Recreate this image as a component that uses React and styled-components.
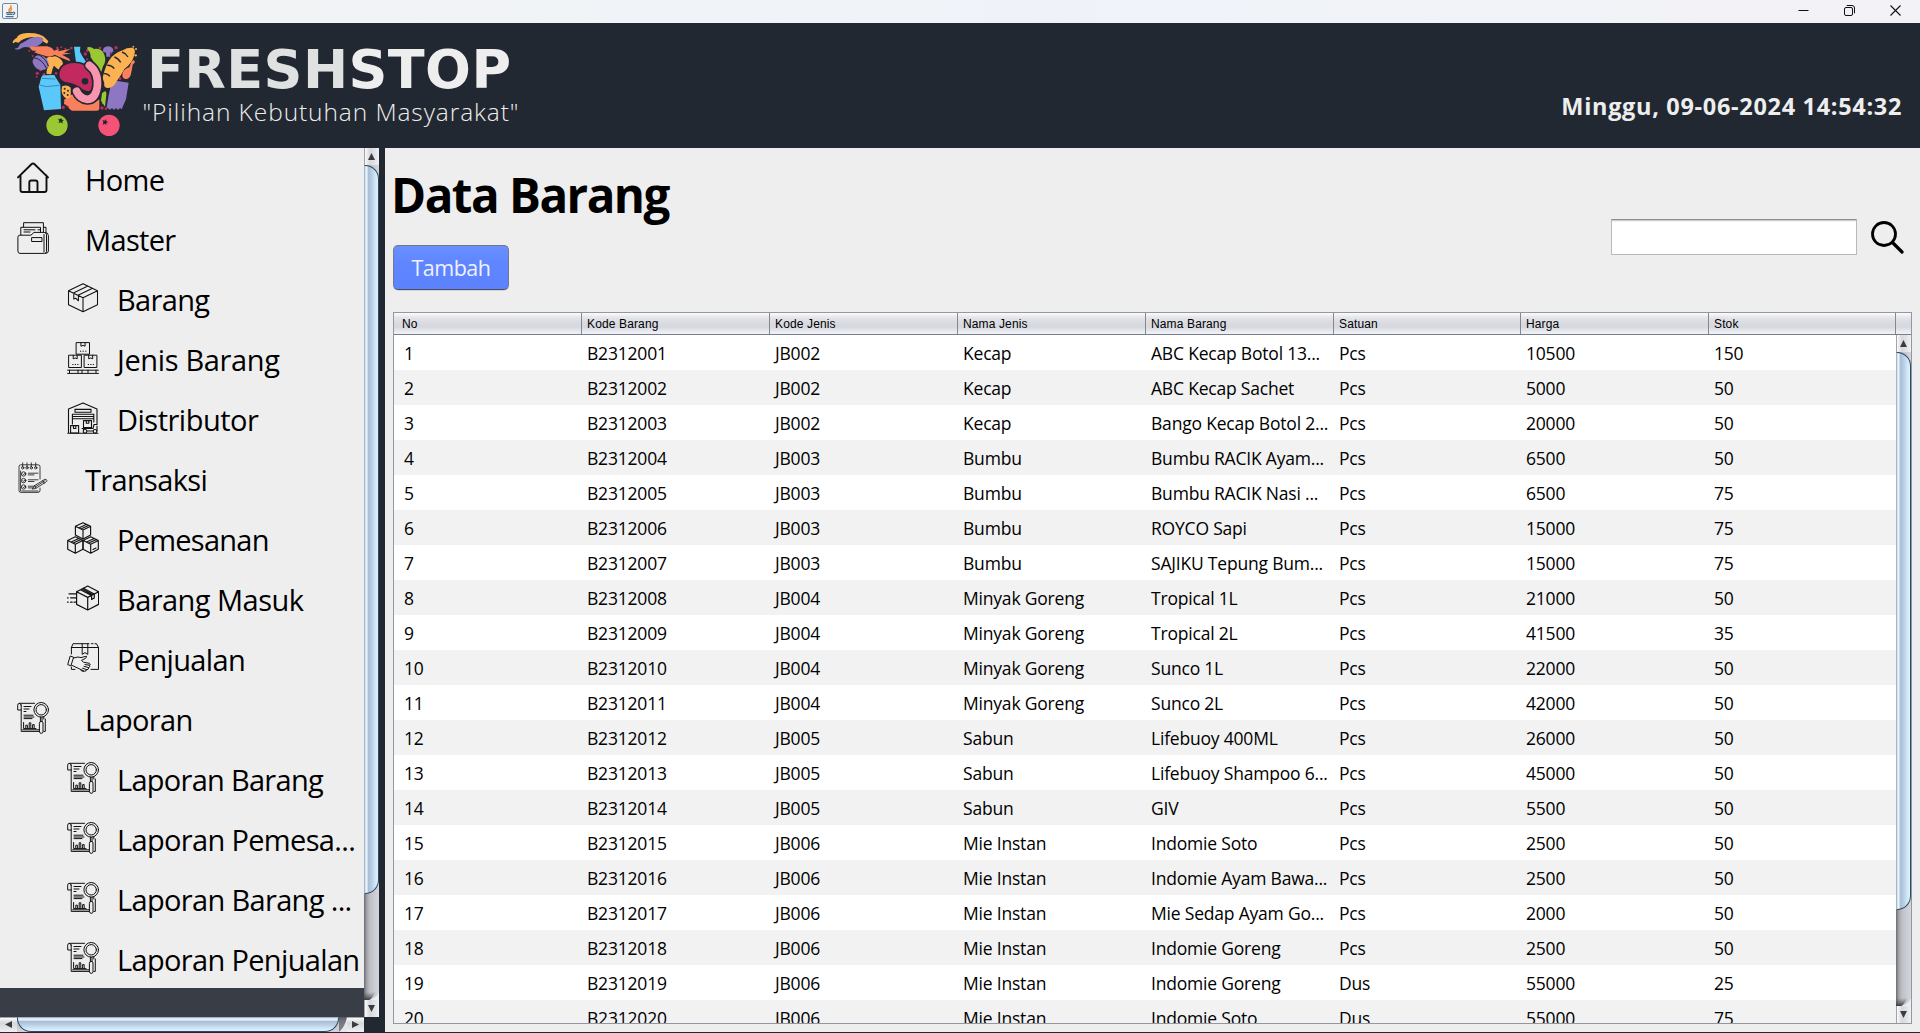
import React from "react";
import styled, { createGlobalStyle } from "styled-components";

const Global = createGlobalStyle`
  * { box-sizing: border-box; }
  html, body { margin: 0; padding: 0; overflow: hidden; }
  body { font-family: "Open Sans", "Noto Sans", sans-serif; color: #000; background: #222831; }
`;

const Window = styled.div`
  width: 1920px;
  height: 1033px;
  display: flex;
  flex-direction: column;
  background: #222831;
  overflow: hidden;
`;

const TitleBar = styled.div`
  height: 23px;
  flex: none;
  display: flex;
  justify-content: space-between;
  background: linear-gradient(90deg, #f2f3f4, #eff3f9 55%, #f3f2f6);
`;

const Header = styled.header`
  height: 125px;
  flex: none;
  display: flex;
  justify-content: space-between;
  background: #222831;
`;

const Clock = styled.div`
  padding: 66px 18px 0 0;
  height: 125px;
  line-height: 34px;
  font-size: 23.5px;
  font-weight: 700;
  letter-spacing: 0.68px;
  color: #eee;
  white-space: nowrap;
`;

const Body = styled.div`
  height: 884px;
  flex: none;
  display: flex;
`;

const Sidebar = styled.aside`
  width: 385px;
  flex: none;
  display: flex;
  flex-direction: column;
`;

const SideTop = styled.div`
  height: 869px;
  display: flex;
`;

const Menu = styled.nav`
  width: 364px;
  height: 869px;
  background: linear-gradient(#eee 0 840px, #393e46 840px);
  overflow: hidden;
`;

const MenuItem = styled.div`
  height: 60px;
  display: flex;
  align-items: flex-start;
  padding: 14px 0 0 ${(p) => (p.$sub ? 67 : 17)}px;
  svg { flex: none; width: 32px; height: 32px; }
`;

const MenuLabel = styled.span`
  margin-left: ${(p) => (p.$sub ? 18 : 36)}px;
  margin-top: -2px;
  line-height: 39px;
  font-size: 29px;
  letter-spacing: ${(p) => p.$tracking ?? -0.66}px;
  white-space: nowrap;
`;

const VBar = styled.div`
  width: 15px;
  height: ${(p) => p.$h}px;
  flex: none;
  display: flex;
  flex-direction: column;
  background: linear-gradient(90deg, #6b6c72 0, #a6a7ad 3px, #bfc0c6 6px, #cfcfd7 12px, #d4d4dc);
`;

const VThumb = styled.div`
  height: ${(p) => p.$h}px;
  flex: none;
  border: 1px solid #2c4a66;
  border-left: 1px solid #a3b5c6;
  border-radius: 0 14px 14px 0;
  background: linear-gradient(90deg, #c6dcee 0, #f7fbfe 2px, #a9bed3 3px, #b3cae0 6px, #cfe4f5 10px, #dff3fc);
`;

const VCap = styled.div`
  height: ${(p) => p.$h}px;
  flex: none;
  background: linear-gradient(90deg, #a3a4aa 0, #a3a4aa 1px, #fafafa 1px, #d6d8dc 6px, #e2e4e8 11px, #f0f1f3);
  svg { display: block; }
`;

const TrackEnd = styled.svg`
  display: block;
  flex: none;
`;

const Spacer = styled.div`
  flex: 1;
`;

const HBar = styled.div`
  width: 364px;
  height: 15px;
  display: flex;
  background: linear-gradient(#6b6c72 0, #a6a7ad 3px, #bfc0c6 6px, #cfcfd7 12px, #d4d4dc);
`;

const HThumb = styled.div`
  width: 322px;
  height: 15px;
  border: 1px solid #2c4a66;
  border-top-color: #a3b5c6;
  border-radius: 0 0 14px 14px;
  background: linear-gradient(#c6dcee 0, #f7fbfe 2px, #a9bed3 3px, #b3cae0 6px, #cfe4f5 10px, #dff3fc);
`;

const HCap = styled.div`
  width: 17px;
  height: 15px;
  background: linear-gradient(#a3a4aa 0, #a3a4aa 1px, #fafafa 1px, #d6d8dc 6px, #e2e4e8 11px, #f0f1f3);
  svg { display: block; }
`;

const Main = styled.main`
  width: 1535px;
  height: 884px;
  background: #eee;
  padding: 14px 9px 0 8px;
`;

const TopArea = styled.div`
  height: 150px;
  display: flex;
  justify-content: space-between;
`;

const Title = styled.h1`
  margin: 0 0 0 -2px;
  height: 64px;
  padding-top: 1px;
  line-height: 64px;
  font-size: 47.5px;
  font-weight: 700;
  letter-spacing: -1.5px;
  white-space: nowrap;
`;

const Button = styled.button`
  display: block;
  margin: 19px 0 0;
  width: 116px;
  height: 45px;
  padding: 0;
  border: 1px solid #74798a;
  border-bottom-color: #4c4f5c;
  border-radius: 5px;
  background: linear-gradient(#6a8fff, #5f85ff 45%, #5c82ff);
  box-shadow: 0 1px 0 #d4d4d6;
  color: #eef1ff;
  font-family: inherit;
  font-size: 21.5px;
  letter-spacing: -0.5px;
`;

const SearchArea = styled.div`
  display: flex;
  align-items: flex-start;
  gap: 14px;
  padding: 57px 7px 0 0;
  svg { margin-top: 2px; display: block; }
`;

const SearchInput = styled.input`
  width: 246px;
  height: 36px;
  padding: 0 6px;
  border: 1px solid #b9b9b9;
  border-top-color: #8b8c8e;
  border-radius: 0;
  outline: none;
  background: #fff;
  box-shadow: inset 0 1px 0 #cfcfcf, inset 0 2px 0 #f2f2f2;
`;

const Table = styled.div`
  width: 1519px;
  height: 712px;
  border: 1px solid #9297a1;
  display: flex;
  flex-direction: column;
  background: #fff;
`;

const HeadRow = styled.div`
  height: 22px;
  flex: none;
  display: grid;
  grid-template-columns: 188px 188px 188px 188px 188px 187px 188px 187px 1fr;
  border-bottom: 1px solid #7a7d85;
  background: linear-gradient(#fbfbfc 0, #e3e4e9 5px, #dadbe1 10px, #d6d8de 14px, #e6e9f0 18px, #eff2f8);
`;

const HeadCell = styled.div`
  padding: 1px 0 0 ${(p) => (p.$first ? 8 : 5)}px;
  height: 21px;
  border-right: ${(p) => (p.$last ? 0 : 1)}px solid #85888f;
  font: 12px/20px "Liberation Sans", Arial, sans-serif;
  letter-spacing: 0.13px;
  white-space: nowrap;
`;

const TableBody = styled.div`
  display: flex;
  height: 688px;
`;

const Rows = styled.div`
  width: 1502px;
  height: 688px;
  overflow: hidden;
`;

const Row = styled.div`
  height: 35px;
  display: grid;
  grid-template-columns: 188px 188px 188px 188px 188px 187px 188px 187px;
  background: ${(p) => (p.$alt ? "#f2f2f2" : "#fff")};
`;

const Cell = styled.div`
  padding: 1px 0 0 ${(p) => (p.$first ? 10 : 5)}px;
  line-height: 35px;
  font-size: 17.5px;
  letter-spacing: -0.2px;
  white-space: nowrap;
`;

const Controls = styled.div`
  display: flex;
  align-items: flex-start;
  gap: 35px;
  padding: 5px 19px 0 0;
  svg { display: block; }
`;

const AppIcon = styled.div`
  padding: 3px 0 0 2px;
  svg { display: block; }
`;

const LineIcon = ({ children, w = 1 }) => (
  <svg viewBox="0 0 32 32" fill="none" stroke="#111" strokeWidth={w} strokeLinejoin="round" strokeLinecap="round">
    {children}
  </svg>
);

const HomeIcon = () => (
  <LineIcon w={1.9}>
    <path d="M1 15.4 14.4 2.2Q16 .8 17.6 2.2L31 15.4M3.5 13.5V28Q3.5 30 5.5 30H27.5Q29.5 30 29.5 28V13.5M12.3 30V20.5Q12.3 18.5 14.3 18.5H18.5Q20.5 18.5 20.5 20.5V30" />
  </LineIcon>
);

const FolderIcon = () => (
  <LineIcon>
    <path d="M.9 15Q.9 13.2 2.7 13.2H14L17 10.4H27.2Q29.5 10.4 29.5 12.6V29.5Q29.5 31.4 27.5 31.4H3Q.9 31.4 .9 29.4Z" />
    <path d="M3.8 13V5.3H6.6V.7H26.4V10M26.4 5.3H29V10.4M6.6 5.3H23.5V10M28 10.5Q31.4 10.5 31.4 13.5V29Q31.4 31.4 28.5 31.4M27 12.5V30" />
    <path d="M7 7.8H18M7 10H13M15 15.6H25V19.5H15ZM21 7.8H23" />
  </LineIcon>
);

const BoxIcon = () => (
  <LineIcon w={1.05}>
    <path d="M16 1.7 30.5 8.7V22.8L16 29.8 1.5 22.8V8.7ZM1.5 8.7 16 15.7 30.5 8.7M16 15.7V29.8M6.4 11 20.9 4M11 13.3 25.6 6.3M6.8 11.2V17L8.7 16.2 11.4 18.8V13.4" />
  </LineIcon>
);

const SmallBox = ({ x, y, w = 13, h = 12 }) => (
  <g transform={`translate(${x} ${y})`}>
    <path d={`M0 0H${w}V${h}H0ZM${w * 0.34} 0V3.6L${w * 0.5} 2.8 ${w * 0.66} 3.6V0`} />
    <path d={`M${w * 0.3} ${h - 3}h.4M${w * 0.5} ${h - 3}h.4M${w * 0.7} ${h - 3}h.4`} />
  </g>
);

const StackIcon = () => (
  <LineIcon>
    <SmallBox x={9.5} y={0.6} h={11.6} />
    <SmallBox x={2} y={13.2} w={12.4} h={12.3} />
    <SmallBox x={17.5} y={13.2} w={12.4} h={12.3} />
    <path d="M.6 28.2H31.4M.6 31.4H31.4M2.5 28.2V31M11 28.2V31M15 28.2V31M21 28.2V31M29 28.2V31" />
  </LineIcon>
);

const WarehouseIcon = () => (
  <LineIcon w={1.1}>
    <path d="M1.5 31V7L16 .9 30 7V22M.8 31.3H31M8 7.4H24V10.2H8ZM5.4 12.3H26.8V16.8H5.4ZM5.4 14.5H26.8M5.4 17V22M26.8 17V20" />
    <path d="M3.6 23.6H11.6V31H3.6ZM6.5 23.6V26.5H8.8V23.6M16.5 18.6H24.5V25.6H16.5ZM19.3 18.6V21.3H21.8V18.6" />
    <path d="M15 26.5H26L27 22.5H30M30 24V29H16.5V26.5" />
    <circle cx="18" cy="29.3" r="1.8" fill="#eee" />
    <circle cx="28" cy="29.3" r="1.8" fill="#eee" />
  </LineIcon>
);

const NotepadIcon = () => (
  <LineIcon w={0.8}>
    <path d="M23 17V4.6Q23 2.8 21 2.8H3.8Q2 2.8 2 4.6V28.5Q2 30.4 4 30.4H21Q23 30.4 23 28.5V26M3.6 9V29M5 29H21" />
    {[5.7, 10, 14.3, 18.7].map((x) => (
      <g key={x}>
        <path d={`M${x} .8V5`} />
        <circle cx={x} cy="5.8" r="1.2" />
      </g>
    ))}
    {[12, 18.6, 25].map((y) => (
      <g key={y}>
        <circle cx="6.6" cy={y} r="2.2" />
        <path d={`M5.8 ${y}l.8.8 1.6-1.8M11.3 ${y - 0.8}H21M11.3 ${y + 0.9}H17`} />
      </g>
    ))}
    <path
      fill="#eee"
      d="M15.5 26.8 17.6 23.6 27.8 17.3Q29.5 17 29.9 18.4 30 19.4 29.2 19.9L19 26.2ZM17.6 23.6 19 26.2M25.8 18.6 27.2 21.1M18 25 28 18.7"
    />
  </LineIcon>
);

const Cube = ({ x, y }) => (
  <path
    transform={`translate(${x} ${y})`}
    d="M0 0 7.6 3.6V12.4L0 16.4-7.6 12.4V3.6ZM-7.6 3.6 0 7.4 7.6 3.6M0 7.4V16.4M-4.2 5.3 3.6 1.6M-2 6.3 5.8 2.6"
  />
);

const CubesIcon = () => (
  <LineIcon w={1.15}>
    <Cube x={16} y={0.7} />
    <Cube x={8.3} y={14.8} />
    <Cube x={23.7} y={14.8} />
    <path d="M26 27.5 29 26" />
  </LineIcon>
);

const FastBoxIcon = () => (
  <LineIcon w={1.2}>
    <path d="M20.7 4 31.6 9.7V22.4L20.7 28 9.6 22.4V9.7ZM9.6 9.7 20.7 15.4 31.6 9.7M20.7 15.4V28M13.4 7.8 24.6 13.4V17.4L27.3 16V12L16.4 6.2M15 7 26 12.7" />
    <path d="M2 11.8H9M.5 15.8H1.2M3.6 15.8H9M.5 20.2H1.2M3.6 20.2H5.2M7 20.2H9" />
  </LineIcon>
);

const HandoverIcon = () => (
  <LineIcon>
    <path d="M4.4 12V5.5L6 1.7H22M24.5 1.7H26M28 1.7H29.5L31.5 5.5V27.4H24M4.4 5.5H31.5M4.4 25V27.4H8" />
    <path d="M15.2 1.7V12.4L18 10.6 20.8 12.4V1.7" />
    <path d="M.8 22.2 3.2 14 6.6 15.2 4 23.5ZM6.4 16 11 15 14 15.6 19.4 14.2Q20.2 15.4 18 16.6L14.5 18.4 16.5 20.2 22.5 21.4Q24 22 22.6 23.2L18 22.6M22.4 23.2Q23.8 25 21.8 25.6L17 24.4M21.6 25.6Q22 27.6 20 27.8L15.6 26.2M19.6 27.8Q19.2 29.8 17.4 29.2L4.6 23.2M14 28.5 16.5 29.5" />
  </LineIcon>
);

const ReportIcon = () => (
  <LineIcon>
    <path d="M17.5 1.3H2.6Q.7 1.3 .7 3.2V8H4.2M4.2 3.4Q4.2 1.4 2.6 1.4M4.2 3V29.4H22M28.3 17V29.4H26.8M5.6 27.8H22M26.8 15V17" />
    <circle cx="24.2" cy="7.8" r="7.3" />
    <circle cx="24.2" cy="7.8" r="5.2" />
    <path d="M23.4 15.2V19.5M25 15.2V19.5M22.4 21Q22.4 19.4 24.2 19.4 26 19.4 26 21V29.5Q26 31.4 24.2 31.4 22.4 31.4 22.4 29.5Z" />
    <path d="M7 4.5H14M7 7H12M7 9.5H9M7 13.2H16M7 15H17M7 16.6H15M6.6 20.5V26.6H19M8.8 26V23.2H10.4V26M12.2 26V20.8H13.8V26M15.6 26V22.6H17.2V26" />
  </LineIcon>
);

const Brand = styled.div`
  display: flex;
  align-items: flex-start;
`;

const Wordmark = styled.svg`
  display: block;
  margin-left: -2px;
`;

const berries = [
  [172, 84, 4], [184, 82, 3], [196, 86, 3], [214, 84, 4], [262, 92, 4], [300, 84, 4], [348, 83, 5],
  [112, 160, 5], [122, 150, 4], [110, 170, 3], [132, 163, 4], [168, 160, 4], [150, 168, 3], [256, 102, 5],
  [262, 118, 3], [236, 136, 3], [370, 116, 4], [360, 176, 4], [196, 240, 4], [190, 262, 5], [202, 256, 4],
  [306, 264, 5], [318, 266, 4], [372, 100, 3], [385, 92, 3], [98, 108, 3], [334, 100, 3], [308, 250, 3],
  [100, 126, 3], [88, 92, 3], [380, 112, 3],
];

const CartLogo = () => (
  <svg width="145" height="125" viewBox="0 9 435 375">
    <g fill="#c2295f">
      {berries.map(([x, y, r]) => (
        <circle key={`${x}-${y}`} cx={x} cy={y} r={r} />
      ))}
    </g>
    <g fill="#fcb250">
      <circle cx="408" cy="87" r="3" />
      <circle cx="400" cy="80" r="2.5" />
      <circle cx="407" cy="106" r="3.5" />
    </g>
    <path fill="#fcb250" d="M38 68Q38 60 50 54 54 40 82 39 124 38 138 56L145 64 141 71 131 65Q118 50 92 52 66 56 56 68L46 66 40 70Z" />
    <path fill="#8d77c2" d="M46 84Q55 87 60 72 72 66 88 56 108 47 124 52 134 57 127 67 114 84 84 82 70 78 62 86 52 90 46 88Z" />
    <path fill="#fa7f5b" d="M88 80Q116 78 142 79 156 82 162 92L178 86 174 94 212 86 192 98 214 100 186 104 208 116 210 124 180 112 164 104Q150 114 130 106 112 102 103 97L109 92 98 92Q90 86 88 80Z" />
    <path fill="#fcb250" d="M138 121Q140 108 156 111 166 105 176 113 192 122 188 138 183 152 172 146L162 137Q158 142 154 163L140 162Q138 150 147 136 136 132 138 121Z" />
    <ellipse cx="122" cy="128" rx="25" ry="21" transform="rotate(35 122 128)" fill="#8d77c2" />
    <path d="M101 113Q126 116 140 146M116 104Q138 116 145 138" fill="none" stroke="#222831" strokeWidth="3" />
    <path fill="#5ac8fa" d="M222 80H241L240 95Q248 112 259 126L244 136 228 126 225 104ZM124 172 128 166 163 165 168 174 181 194 183 267 132 271 116 200Z" />
    <path d="M119 195 138 200 179 196M126 175 166 177" fill="none" stroke="#2d6b94" strokeWidth="2" />
    <path fill="#9ac832" d="M262 82Q272 78 282 87 306 84 313 104 320 122 309 139L298 174 287 145Q282 124 272 112 272 96 262 88ZM306 220Q320 205 319 224L315 260 303 242Z" />
    <path fill="#8d77c2" d="M309 94Q308 80 324 79 341 80 340 94 334 100 330 96L331 110H319L318 97Q312 99 309 94ZM336 181 358 184 386 188 378 238 365 268 360 264 354 270 348 264 342 270 336 264 330 269 320 262 326 226Z" />
    <path fill="#fcb250" d="M308 174Q316 134 334 112 350 96 370 90 380 82 398 83 408 88 403 104 398 128 374 146 364 164 350 184 340 206 322 204 310 202 313 190Z" />
    <path d="M321 136Q333 134 343 146M343 111Q354 114 362 127M366 96Q378 100 384 111M310 160Q322 160 330 169" fill="none" stroke="#222831" strokeWidth="4" />
    <path fill="#fa7f5b" d="M395 124 402 120 405 127 398 134Q396 150 392 166 386 180 374 176 364 172 368 158 374 146 388 142ZM193 240Q206 228 218 222L240 246 280 250 298 238V266Q298 272 290 272H216Q204 266 205 258L192 252Z" />
    <path fill="#fcb250" d="M186 199Q202 192 212 203V230L202 237Q180 228 186 199Z" />
    <g fill="#222831">
      <circle cx="194" cy="206" r="3" />
      <circle cx="204" cy="212" r="3" />
      <circle cx="193" cy="219" r="3" />
      <circle cx="203" cy="225" r="3" />
    </g>
    <path fill="#c2295f" stroke="#222831" strokeWidth="5" d="M176 168Q174 138 200 130 228 122 256 134 276 146 278 174 282 200 272 214 258 220 240 206 226 194 204 190 178 186 176 168Z" />
    <path fill="none" stroke="#222831" strokeWidth="33" strokeLinecap="round" d="M268 136Q296 156 292 200 286 238 262 238 240 236 230 214" />
    <path fill="none" stroke="#f994ae" strokeWidth="23" strokeLinecap="round" d="M268 136Q296 156 292 200 286 238 262 238 240 236 230 214" />
    <circle cx="255" cy="184" r="10" fill="#222831" />
    <circle cx="171" cy="316" r="32" fill="#9ac832" />
    <circle cx="327" cy="316" r="32" fill="#f65277" />
    <path fill="#222831" d="m174 296 6 2 3-5 3 6 6 1-5 4 1 7-6-4-7 2 3-6ZM308 300l6 2 4-5 1 7 6 2-6 3v6l-5-4-6 3 2-7Z" />
  </svg>
);

const Logo = () => (
  <Brand>
    <CartLogo />
    <Wordmark width="387" height="125" viewBox="143 23 387 125">
      <text x="147" y="88.3" textLength="364" fontFamily="DejaVu Sans" fontWeight="700" fontSize="54" fill="#eee">
        <tspan fill="#e0e2e2">FRESH</tspan>STOP
      </text>
      <text x="142.5" y="120.5" textLength="376" lengthAdjust="spacing" fontFamily="Open Sans, sans-serif" fontWeight="300" fontSize="24.5" fill="#eee">
        "Pilihan Kebutuhan Masyarakat"
      </text>
    </Wordmark>
  </Brand>
);

const menu = [
  ["Home", HomeIcon],
  ["Master", FolderIcon],
  ["Barang", BoxIcon, true],
  ["Jenis Barang", StackIcon, true, -0.35],
  ["Distributor", WarehouseIcon, true, -0.5],
  ["Transaksi", NotepadIcon],
  ["Pemesanan", CubesIcon, true, -0.75],
  ["Barang Masuk", FastBoxIcon, true, -0.55],
  ["Penjualan", HandoverIcon, true],
  ["Laporan", ReportIcon],
  ["Laporan Barang", ReportIcon, true, -0.72],
  ["Laporan Pemesa...", ReportIcon, true],
  ["Laporan Barang ...", ReportIcon, true],
  ["Laporan Penjualan", ReportIcon, true],
];

const columns = ["No", "Kode Barang", "Kode Jenis", "Nama Jenis", "Nama Barang", "Satuan", "Harga", "Stok"];

const items = [
  ["JB002", "Kecap", "ABC Kecap Botol 13...", "Pcs", 10500, 150],
  ["JB002", "Kecap", "ABC Kecap Sachet", "Pcs", 5000, 50],
  ["JB002", "Kecap", "Bango Kecap Botol 2...", "Pcs", 20000, 50],
  ["JB003", "Bumbu", "Bumbu RACIK Ayam...", "Pcs", 6500, 50],
  ["JB003", "Bumbu", "Bumbu RACIK Nasi ...", "Pcs", 6500, 75],
  ["JB003", "Bumbu", "ROYCO Sapi", "Pcs", 15000, 75],
  ["JB003", "Bumbu", "SAJIKU Tepung Bum...", "Pcs", 15000, 75],
  ["JB004", "Minyak Goreng", "Tropical 1L", "Pcs", 21000, 50],
  ["JB004", "Minyak Goreng", "Tropical 2L", "Pcs", 41500, 35],
  ["JB004", "Minyak Goreng", "Sunco 1L", "Pcs", 22000, 50],
  ["JB004", "Minyak Goreng", "Sunco 2L", "Pcs", 42000, 50],
  ["JB005", "Sabun", "Lifebuoy 400ML", "Pcs", 26000, 50],
  ["JB005", "Sabun", "Lifebuoy Shampoo 6...", "Pcs", 45000, 50],
  ["JB005", "Sabun", "GIV", "Pcs", 5500, 50],
  ["JB006", "Mie Instan", "Indomie Soto", "Pcs", 2500, 50],
  ["JB006", "Mie Instan", "Indomie Ayam Bawa...", "Pcs", 2500, 50],
  ["JB006", "Mie Instan", "Mie Sedap Ayam Go...", "Pcs", 2000, 50],
  ["JB006", "Mie Instan", "Indomie Goreng", "Pcs", 2500, 50],
  ["JB006", "Mie Instan", "Indomie Goreng", "Dus", 55000, 25],
  ["JB006", "Mie Instan", "Indomie Soto", "Dus", 55000, 75],
];

const VScroll = ({ height, thumb }) => (
  <VBar $h={height}>
    <VCap $h={17}>
      <svg width="15" height="17"><path d="M4 12 7.5 5 11 12Z" fill="#3c3c40" /></svg>
    </VCap>
    <VThumb $h={thumb} />
    <Spacer />
    <TrackEnd width="15" height="8">
      <defs>
        <linearGradient id="endShade" x1="0" y1="0" x2="0" y2="1">
          <stop offset="0" stopColor="#55565c" stopOpacity="0" />
          <stop offset="1" stopColor="#3c3d42" />
        </linearGradient>
      </defs>
      <path d="M0 0H12L6 8H0Z" fill="url(#endShade)" />
      <path d="M15 0Q13 6 5 8H15Z" fill="#eceef1" />
    </TrackEnd>
    <VCap $h={17}>
      <svg width="15" height="17"><path d="M4 5H11L7.5 12Z" fill="#3c3c40" /></svg>
    </VCap>
  </VBar>
);

export default function App() {
  return (
    <Window>
      <Global />
      <TitleBar>
        <AppIcon>
          <svg width="16" height="16" viewBox="0 0 16 16">
            <rect x=".5" y=".5" width="15" height="15" rx="1.5" fill="#f1f3f5" stroke="#6e8ba3" />
            <path d="M8 9Q5.8 7.4 8 5.6 9.8 4.2 8.6 2.4M9 8.6Q8.3 7.4 9.8 5.4" fill="none" stroke="#ee8524" strokeWidth="1.3" />
            <path d="M4 9.6H11M4.6 11.4H10.4M3.6 13.6H11.6M11 9.2Q13.4 8.8 12.6 10.6 12 11.4 10.8 11.6" fill="none" stroke="#4c7090" strokeWidth="1.1" />
          </svg>
        </AppIcon>
        <Controls>
          <svg width="11" height="11"><path d="M.5 5.5H10.5" stroke="#111" /></svg>
          <svg width="11" height="11" fill="none" stroke="#111">
            <rect x=".5" y="2.5" width="8" height="8" rx="1.5" />
            <path d="M2.7 .5H8Q10.5 .5 10.5 3V8.3" />
          </svg>
          <svg width="11" height="11"><path d="M.5.5 10.5 10.5M10.5.5.5 10.5" stroke="#111" strokeWidth="1.1" /></svg>
        </Controls>
      </TitleBar>
      <Header>
        <Logo />
        <Clock>Minggu, 09-06-2024 14:54:32</Clock>
      </Header>
      <Body>
        <Sidebar>
          <SideTop>
            <Menu>
              {menu.map(([label, Icon, sub, tracking]) => (
                <MenuItem key={label} $sub={sub}>
                  <Icon />
                  <MenuLabel $sub={sub} $tracking={tracking}>{label}</MenuLabel>
                </MenuItem>
              ))}
            </Menu>
            <VScroll height={869} thumb={729} />
          </SideTop>
          <HBar>
            <HCap>
              <svg width="17" height="15"><path d="M12 4V11L5 7.5Z" fill="#3c3c40" /></svg>
            </HCap>
            <HThumb />
            <svg width="8" height="15">
              <path d="M0 0H8V5L3 15H0Z" fill="#4a4b50" opacity=".6" />
              <path d="M8 0Q6 10 0 15H8Z" fill="#e4e6ea" />
            </svg>
            <HCap>
              <svg width="17" height="15"><path d="M5 4V11L12 7.5Z" fill="#3c3c40" /></svg>
            </HCap>
          </HBar>
        </Sidebar>
        <Main>
          <TopArea>
            <div>
              <Title>Data Barang</Title>
              <Button>Tambah</Button>
            </div>
            <SearchArea>
              <SearchInput aria-label="Cari" />
              <svg width="33" height="33" viewBox="0 0 33 33" fill="none" stroke="#000">
                <circle cx="13" cy="13" r="11.5" strokeWidth="2.8" />
                <path d="M21.5 21.5 31 31" strokeWidth="3.2" strokeLinecap="round" />
              </svg>
            </SearchArea>
          </TopArea>
          <Table>
            <HeadRow>
              {columns.map((c, i) => (
                <HeadCell key={c} $first={i === 0}>{c}</HeadCell>
              ))}
              <HeadCell $last />
            </HeadRow>
            <TableBody>
              <Rows>
                {items.map((item, r) => (
                  <Row key={r} $alt={r % 2 === 1}>
                    {[r + 1, `B${2312001 + r}`, ...item].map((v, i) => (
                      <Cell key={i} $first={i === 0}>{v}</Cell>
                    ))}
                  </Row>
                ))}
              </Rows>
              <VScroll height={688} thumb={558} />
            </TableBody>
          </Table>
        </Main>
      </Body>
    </Window>
  );
}
